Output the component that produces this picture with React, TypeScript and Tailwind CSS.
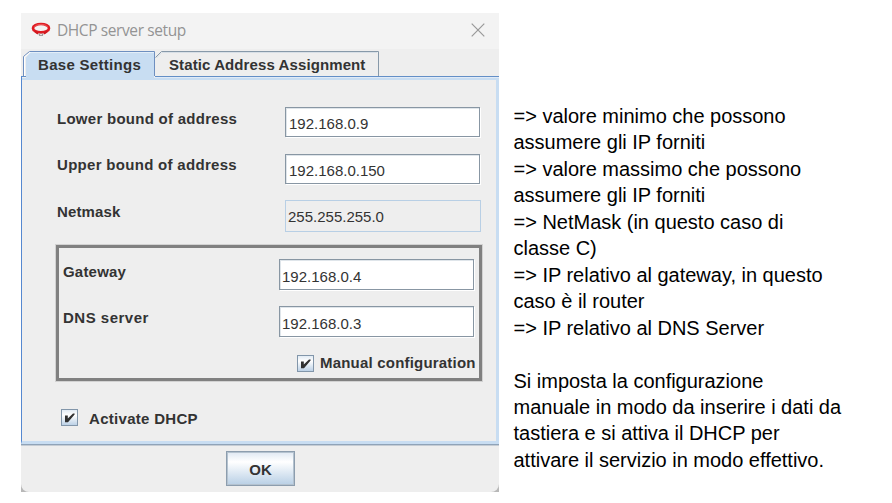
import type { ReactNode } from "react";

function Label({
  children,
  className = "",
  tracking = "tracking-[0.3px]",
}: {
  children: ReactNode;
  className?: string;
  tracking?: string;
}) {
  return (
    <span className={`whitespace-nowrap text-[15px] leading-5 font-bold text-[#333333] ${tracking} ${className}`}>
      {children}
    </span>
  );
}

function Field({ value, className = "h-[31px] pl-[3px]" }: { value: string; className?: string }) {
  return (
    <div
      className={`flex w-[195px] shrink-0 items-end border border-[#8896a3] bg-white pb-[2px] text-[15px] leading-5 text-[#333333] shadow-[1px_1px_0_0_#ffffff,inset_1px_1px_0_0_#dfe5ea] ${className}`}
    >
      {value}
    </div>
  );
}

function Check() {
  return (
    <svg width="17" height="17" viewBox="0 0 17 17" className="shrink-0">
      <defs>
        <linearGradient id="box" x1="0" y1="0" x2="0" y2="1">
          <stop offset="0" stopColor="#dfe9f3" />
          <stop offset="0.35" stopColor="#ffffff" />
          <stop offset="1" stopColor="#b9cfe5" />
        </linearGradient>
      </defs>
      <rect x="0.5" y="0.5" width="16" height="16" fill="url(#box)" stroke="#8296aa" />
      <path d="M4 6.4H6.8V9.4L12 4.4H13.6V5.4L7 13.2H4Z" fill="#303030" />
    </svg>
  );
}

function Logo() {
  return (
    <svg width="20" height="15" viewBox="0 0 20 15" className="shrink-0">
      <ellipse cx="10" cy="6.2" rx="8" ry="4.2" fill="none" stroke="#df1b22" strokeWidth="2.7" />
      <path d="M3 5.2Q5.2 2.3 10 2.3T17 5.2" fill="none" stroke="#f58080" strokeWidth="0.6" />
      <path d="M4 9.4L7 11.8M16 9.4L13 11.8" stroke="#cf1a20" strokeWidth="2" />
      <path d="M7.4 11.8H12.6L11.8 14H8.2Z" fill="#a09898" />
      <path d="M9 12.6H11" stroke="#f3f3f3" strokeWidth="0.9" />
    </svg>
  );
}

function TitleBar() {
  return (
    <div className="flex h-9 items-start bg-[#f3f3f3] pt-[9px] pr-[14px] pl-[10px]">
      <Logo />
      <span className="-mt-[2px] ml-[6px] flex-1 font-['Open_Sans','Noto_Sans',sans-serif] text-[15.5px] leading-5 tracking-[-0.4px] text-[#949494]">
        DHCP server setup
      </span>
      <svg width="14" height="14" viewBox="0 0 14 14" className="mt-[1px]">
        <path d="M0.7 0.7L13.3 13.3M13.3 0.7L0.7 13.3" stroke="#999999" strokeWidth="1.2" />
      </svg>
    </div>
  );
}

function Tabs() {
  return (
    <div className="relative flex h-[31px]">
      <svg width="478" height="31" viewBox="0 0 478 31" className="absolute inset-0">
        <path d="M2.5 27V7.5L8.5 2.5H133.5V27" fill="none" stroke="#6e8fc0" />
        <path d="M3.5 27V8L9 3.5H133" fill="none" stroke="#ffffff" />
        <path d="M5 28V8.5L9.5 3.5H133V28Z" fill="#c8ddf2" />
        <path d="M134.5 8.5L140.5 2.5H357.5V27" fill="none" stroke="#8799a9" />
        <path d="M135.5 9L141 3.5H356" fill="none" stroke="#d8dfe6" />
        <path d="M0 27.5H5M134 27.5H478" stroke="#638fc7" />
        <path d="M5 28.5H478" stroke="#e0eaf6" />
        <path d="M1 29.5H478M1 30.5H478" stroke="#c8ddf2" />
        <path d="M5 27.5H133V31H5Z" fill="#c8ddf2" />
        <path d="M0.5 27V31" stroke="#5588d0" />
      </svg>
      <Label className="relative mt-[6px] ml-[17px] w-[131px]">Base Settings</Label>
      <Label className="relative mt-[6px]" tracking="tracking-[0.1px]">
        Static Address Assignment
      </Label>
    </div>
  );
}

function Dialog() {
  return (
    <div className="mt-[13px] ml-[21px] flex h-[479px] w-[478px] shrink-0 flex-col overflow-hidden bg-[#b8b8b8]">
      <div className="flex flex-1 flex-col overflow-hidden rounded-b-[8px] bg-[#eeeeee]">
        <TitleBar />
        <Tabs />
        <div className="flex h-[364px] flex-col border-r-[3px] border-b-[3px] border-l border-r-[#c8ddf2] border-b-[#c8ddf2] border-l-[#5588d0] pt-[27px] pl-[34px]">
          <div className="flex h-[47px] w-[424px] items-start justify-between pl-px">
            <Label className="mt-[2px]" tracking="tracking-[0.27px]">
              Lower bound of address
            </Label>
            <Field value="192.168.0.9" className="h-[30px] pl-[3px]" />
          </div>
          <div className="flex h-[46px] w-[424px] items-start justify-between pl-px">
            <Label className="mt-[1px]">Upper bound of address</Label>
            <Field value="192.168.0.150" className="h-[30px] pl-[3px]" />
          </div>
          <div className="flex h-[45px] w-[425px] items-start justify-between pl-px">
            <Label className="mt-[2px]" tracking="tracking-[0.15px]">
              Netmask
            </Label>
            <div className="flex h-8 w-[196px] items-end border border-[#b8cfe5] pb-[4px] pl-[2px] text-[15px] leading-5 text-[#333333]">
              255.255.255.0
            </div>
          </div>
          <div className="flex h-[136px] w-[426px] shrink-0 flex-col border-[3px] border-[#808080] pt-[11px] pr-[5px] pl-[4px] shadow-[0_0_0_1px_#d2d2d2]">
            <div className="flex h-[47px] items-start justify-between">
              <Label className="mt-[3px]" tracking="tracking-[0.2px]">
                Gateway
              </Label>
              <Field value="192.168.0.4" className="h-[31px] pl-[2px]" />
            </div>
            <div className="flex h-[49px] items-start justify-between">
              <Label className="mt-[2px]" tracking="tracking-[0.5px]">
                DNS server
              </Label>
              <Field value="192.168.0.3" className="h-[31px] pl-[2px]" />
            </div>
            <div className="flex items-start gap-[6px] pl-[234px]">
              <Check />
              <Label className="-mt-[2px]" tracking="tracking-[0.2px]">
                Manual configuration
              </Label>
            </div>
          </div>
          <div className="mt-[28px] flex items-start gap-[11px] pl-[5px]">
            <Check />
            <Label>Activate DHCP</Label>
          </div>
        </div>
        <div className="flex flex-1 items-start justify-center border-t border-[#8fa3b8] pt-[6px] shadow-[inset_0_1px_0_0_#c5ccd4]">
          <button className="ml-px flex h-[35px] w-[69px] items-center justify-center border border-[#8c9dae] bg-linear-to-b from-[#dfe8f2] via-white via-30% to-[#b8cfe5] pt-[3px] shadow-[inset_0_0_0_1px_#b4c2cf]">
            <Label tracking="tracking-normal">OK</Label>
          </button>
        </div>
      </div>
    </div>
  );
}

const notes = [
  "=> valore minimo che possono",
  "assumere gli IP forniti",
  "=> valore massimo che possono",
  "assumere gli IP forniti",
  "=> NetMask (in questo caso di",
  "classe C)",
  "=> IP relativo al gateway, in questo",
  "caso è il router",
  "=> IP relativo al DNS Server",
  "\u00a0",
  "Si imposta la configurazione",
  "manuale in modo da inserire i dati da",
  "tastiera e si attiva il DHCP per",
  "attivare il servizio in modo effettivo.",
];

export default function App() {
  return (
    <main className="flex h-[503px] w-[892px] overflow-hidden bg-white font-['Liberation_Sans',Arial,sans-serif]">
      <Dialog />
      <div className="mt-[103px] ml-[14.5px] text-[20px] leading-[26.45px] tracking-[-0.01px] whitespace-nowrap text-black">
        {notes.map((line, i) => (
          <p key={i}>{line}</p>
        ))}
      </div>
    </main>
  );
}
